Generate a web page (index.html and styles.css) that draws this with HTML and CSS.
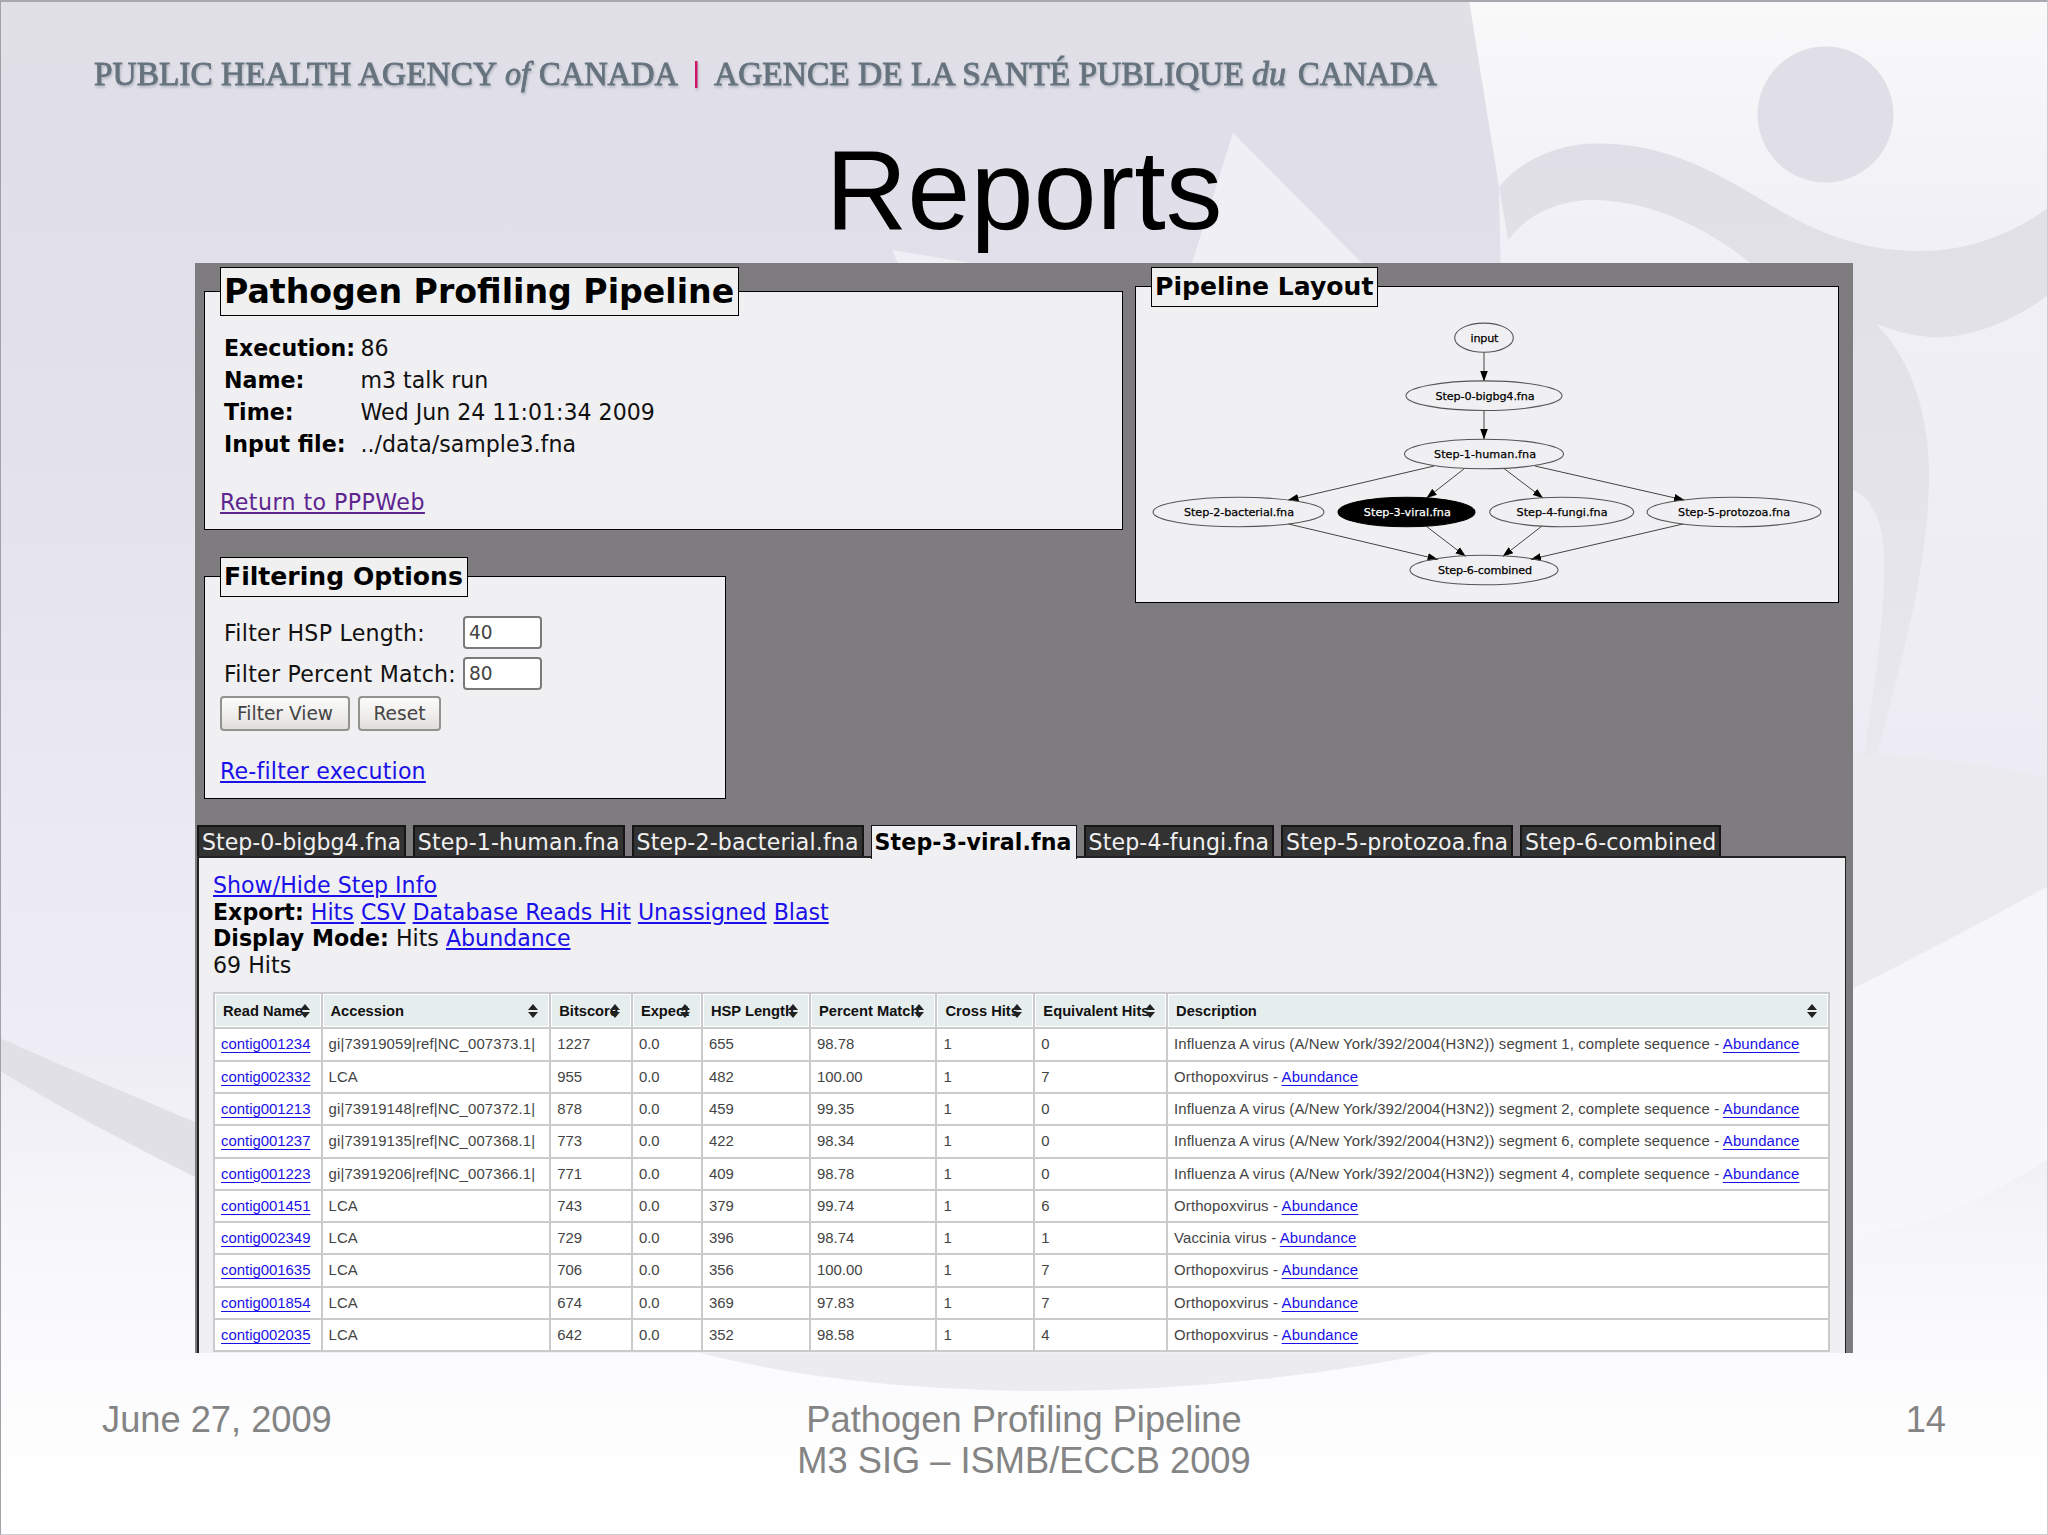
FILE: index.html
```
<!DOCTYPE html>
<html lang="en">
<head>
    <meta charset="UTF-8">
    <meta name="viewport" content="width=device-width, initial-scale=1.0">
    <title>Reports</title>
    <link rel="stylesheet" href="styles.css">
</head>
<body>
<div class="slide">
    <svg class="backdrop" viewBox="0 0 2048 1535" aria-hidden="true">
        <defs>
            <linearGradient id="base" gradientUnits="userSpaceOnUse" x1="0" y1="0" x2="0" y2="1535">
                <stop offset="0" stop-color="#e1e0e5"/>
                <stop offset="0.08" stop-color="#e0dfe9"/>
                <stop offset="0.28" stop-color="#e3e2eb"/>
                <stop offset="0.55" stop-color="#ebeaf3"/>
                <stop offset="0.68" stop-color="#eeedf5"/>
                <stop offset="0.82" stop-color="#f8f7fb"/>
                <stop offset="0.97" stop-color="#ffffff"/>
            </linearGradient>
            <linearGradient id="light" gradientUnits="userSpaceOnUse" x1="0" y1="0" x2="0" y2="780">
                <stop offset="0" stop-color="#f9f9fa"/>
                <stop offset="0.3" stop-color="#f1f0f6"/>
                <stop offset="1" stop-color="#edecf4"/>
            </linearGradient>
            <linearGradient id="arm" gradientUnits="userSpaceOnUse" x1="0" y1="140" x2="0" y2="760">
                <stop offset="0" stop-color="#e0dfe7"/>
                <stop offset="0.4" stop-color="#e3e2e8"/>
                <stop offset="1" stop-color="#e9e8ee"/>
            </linearGradient>
            <linearGradient id="low" gradientUnits="userSpaceOnUse" x1="0" y1="886" x2="0" y2="1330">
                <stop offset="0" stop-color="#f6f6fa"/>
                <stop offset="0.6" stop-color="#f7f6fa"/>
                <stop offset="1" stop-color="#f8f7fb" stop-opacity="0"/>
            </linearGradient>
            <linearGradient id="fold" gradientUnits="userSpaceOnUse" x1="0" y1="1159" x2="0" y2="1320">
                <stop offset="0" stop-color="#f1f0f5"/>
                <stop offset="1" stop-color="#f8f7fb" stop-opacity="0"/>
            </linearGradient>
        </defs>
        <rect width="2048" height="1535" fill="url(#base)"/>
        <path d="M1469 0H2048V780H1511L1499 187Z" fill="url(#light)"/>
        <path d="M1499 187C1522 158 1562 142 1602 143.500C1665 144 1716 172 1762 200C1800 223 1850 251 1919 251C1972 251 2015 232 2048 208V295C2010 325 1960 340 1930 337C1908 335 1892 330 1876 324C1912 360 1929 415 1929 475C1929 560 1905 650 1877 755L1864 755C1874 690 1885 620 1884 560C1883 520 1872 498 1853 490L1749 262C1700 222 1640 199 1589 200C1553 202 1526 216 1508 240L1512 262Z" fill="url(#arm)"/>
        <circle cx="1825.500" cy="114.500" r="68" fill="#e0dfe7"/>
        <path d="M1233 133L1362 263H1192Z" fill="#f0eff5"/>
        <path d="M892 250L970 263H898Z" fill="#f0eff5"/>
        <path d="M1840 752Q1950 756 2048 778V890L1840 997Z" fill="#ebeaee"/>
        <path d="M2048 886Q1960 935 1840 995V1340H2048Z" fill="url(#low)"/>
        <path d="M2048 1159Q1950 1222 1880 1231L1840 1250V1340H2048Z" fill="url(#fold)"/>
        <path d="M0 1038Q90 1078 195 1122V1177Q80 1120 0 1071Z" fill="#e1e0e6"/>
        <path d="M700 1353Q850 1391 1050 1391Q1240 1391 1432 1353Z" fill="#ececef"/>
    </svg>

    <header class="masthead">
        <svg class="wordmark" viewBox="0 0 1350 44" role="img">
            <text x="0" y="30" textLength="403" lengthAdjust="spacingAndGlyphs">PUBLIC HEALTH AGENCY</text>
            <text class="small-word" x="411" y="30" textLength="25" lengthAdjust="spacingAndGlyphs">of</text>
            <text x="445" y="30" textLength="139" lengthAdjust="spacingAndGlyphs">CANADA</text>
            <rect x="601" y="6" width="2.500" height="27" fill="#cf1668"/>
            <text x="620" y="30" textLength="530" lengthAdjust="spacingAndGlyphs">AGENCE DE LA SANTÉ PUBLIQUE</text>
            <text class="small-word" x="1158" y="30" textLength="34" lengthAdjust="spacingAndGlyphs">du</text>
            <text x="1204" y="30" textLength="139" lengthAdjust="spacingAndGlyphs">CANADA</text>
        </svg>
        <h1>Reports</h1>
    </header>

    <main class="report">
        <div class="top">
            <div class="left">
                <fieldset class="info">
                    <legend>Pathogen Profiling Pipeline</legend>
                    <dl>
                        <dt>Execution:</dt><dd>86</dd>
                        <dt>Name:</dt><dd>m3 talk run</dd>
                        <dt>Time:</dt><dd>Wed Jun 24 11:01:34 2009</dd>
                        <dt>Input file:</dt><dd>../data/sample3.fna</dd>
                    </dl>
                    <a class="visited" href="#">Return to PPPWeb</a>
                </fieldset>
                <fieldset class="filter">
                    <legend>Filtering Options</legend>
                    <div class="fields">
                        <label for="hsp">Filter HSP Length:</label>
                        <input id="hsp" type="text" value="40">
                        <label for="pct">Filter Percent Match:</label>
                        <input id="pct" type="text" value="80">
                    </div>
                    <div class="buttons">
                        <button type="button" class="view">Filter View</button>
                        <button type="button" class="reset">Reset</button>
                    </div>
                    <a href="#">Re-filter execution</a>
                </fieldset>
            </div>
            <fieldset class="layout">
                <legend>Pipeline Layout</legend>
                <svg class="graph" viewBox="0 18 702 296" width="702" height="296">
                    <defs>
                        <marker id="arrow" markerUnits="userSpaceOnUse" markerWidth="11" markerHeight="8" refX="10" refY="4" orient="auto">
                            <path d="M0 0.200L10.500 4L0 7.800Z"/>
                        </marker>
                    </defs>
                    <g class="edges">
                        <path d="M348 64V93"/>
                        <path d="M348 123V151"/>
                        <path d="M298 178L152.500 212"/>
                        <path d="M328.500 180.500L290.700 210"/>
                        <path d="M368 180.500L406.800 210"/>
                        <path d="M399 178L548 212"/>
                        <path d="M152.500 236L301.600 271.300"/>
                        <path d="M290.700 238.600L329.500 268.300"/>
                        <path d="M406 238L367 268.300"/>
                        <path d="M547 236L395 271.300"/>
                    </g>
                    <g class="nodes">
                        <ellipse cx="348" cy="49.700" rx="29.300" ry="14.600"/>
                        <ellipse cx="348" cy="107.700" rx="78" ry="14.800"/>
                        <ellipse cx="348" cy="166" rx="79.500" ry="14.800"/>
                        <ellipse cx="102.500" cy="224" rx="85.500" ry="14.800"/>
                        <ellipse class="current" cx="270.500" cy="224" rx="68.500" ry="14.800"/>
                        <ellipse cx="425.700" cy="224" rx="72" ry="14.800"/>
                        <ellipse cx="598" cy="224" rx="87" ry="14.800"/>
                        <ellipse cx="348" cy="282" rx="74" ry="14.800"/>
                    </g>
                    <g class="names">
                        <text x="348.500" y="53.500" textLength="28">input</text>
                        <text x="349" y="111.500" textLength="99">Step-0-bigbg4.fna</text>
                        <text x="349" y="170" textLength="102">Step-1-human.fna</text>
                        <text x="103" y="228" textLength="110">Step-2-bacterial.fna</text>
                        <text class="current" x="271.300" y="228" textLength="87">Step-3-viral.fna</text>
                        <text x="426" y="228" textLength="91">Step-4-fungi.fna</text>
                        <text x="598" y="228" textLength="112">Step-5-protozoa.fna</text>
                        <text x="349" y="285.500" textLength="94">Step-6-combined</text>
                    </g>
                </svg>
            </fieldset>
        </div>

        <nav class="tabs">
            <span>Step-0-bigbg4.fna</span>
            <span>Step-1-human.fna</span>
            <span>Step-2-bacterial.fna</span>
            <span class="active">Step-3-viral.fna</span>
            <span>Step-4-fungi.fna</span>
            <span>Step-5-protozoa.fna</span>
            <span>Step-6-combined</span>
        </nav>

        <section class="step">
            <div><a href="#">Show/Hide Step Info</a></div>
            <div><b>Export:</b> <a href="#">Hits</a> <a href="#">CSV</a> <a href="#">Database Reads Hit</a> <a href="#">Unassigned</a> <a href="#">Blast</a></div>
            <div><b>Display Mode:</b> Hits <a href="#">Abundance</a></div>
            <div>69 Hits</div>
            <table class="hits">
                <thead>
                    <tr><th>Read Name</th><th>Accession</th><th>Bitscore</th><th>Expect</th><th>HSP Length</th><th>Percent Match</th><th>Cross Hits</th><th>Equivalent Hits</th><th>Description</th></tr>
                </thead>
                <tbody>
                    <tr><td><a href="#">contig001234</a></td><td>gi|73919059|ref|NC_007373.1|</td><td>1227</td><td>0.0</td><td>655</td><td>98.78</td><td>1</td><td>0</td><td>Influenza A virus (A/New York/392/2004(H3N2)) segment 1, complete sequence - <a href="#">Abundance</a></td></tr>
                    <tr><td><a href="#">contig002332</a></td><td>LCA</td><td>955</td><td>0.0</td><td>482</td><td>100.00</td><td>1</td><td>7</td><td>Orthopoxvirus - <a href="#">Abundance</a></td></tr>
                    <tr><td><a href="#">contig001213</a></td><td>gi|73919148|ref|NC_007372.1|</td><td>878</td><td>0.0</td><td>459</td><td>99.35</td><td>1</td><td>0</td><td>Influenza A virus (A/New York/392/2004(H3N2)) segment 2, complete sequence - <a href="#">Abundance</a></td></tr>
                    <tr><td><a href="#">contig001237</a></td><td>gi|73919135|ref|NC_007368.1|</td><td>773</td><td>0.0</td><td>422</td><td>98.34</td><td>1</td><td>0</td><td>Influenza A virus (A/New York/392/2004(H3N2)) segment 6, complete sequence - <a href="#">Abundance</a></td></tr>
                    <tr><td><a href="#">contig001223</a></td><td>gi|73919206|ref|NC_007366.1|</td><td>771</td><td>0.0</td><td>409</td><td>98.78</td><td>1</td><td>0</td><td>Influenza A virus (A/New York/392/2004(H3N2)) segment 4, complete sequence - <a href="#">Abundance</a></td></tr>
                    <tr><td><a href="#">contig001451</a></td><td>LCA</td><td>743</td><td>0.0</td><td>379</td><td>99.74</td><td>1</td><td>6</td><td>Orthopoxvirus - <a href="#">Abundance</a></td></tr>
                    <tr><td><a href="#">contig002349</a></td><td>LCA</td><td>729</td><td>0.0</td><td>396</td><td>98.74</td><td>1</td><td>1</td><td>Vaccinia virus - <a href="#">Abundance</a></td></tr>
                    <tr><td><a href="#">contig001635</a></td><td>LCA</td><td>706</td><td>0.0</td><td>356</td><td>100.00</td><td>1</td><td>7</td><td>Orthopoxvirus - <a href="#">Abundance</a></td></tr>
                    <tr><td><a href="#">contig001854</a></td><td>LCA</td><td>674</td><td>0.0</td><td>369</td><td>97.83</td><td>1</td><td>7</td><td>Orthopoxvirus - <a href="#">Abundance</a></td></tr>
                    <tr><td><a href="#">contig002035</a></td><td>LCA</td><td>642</td><td>0.0</td><td>352</td><td>98.58</td><td>1</td><td>4</td><td>Orthopoxvirus - <a href="#">Abundance</a></td></tr>
                </tbody>
            </table>
        </section>
    </main>

    <footer>
        <div class="date">June 27, 2009</div>
        <div class="venue">Pathogen Profiling Pipeline<br>M3 SIG – ISMB/ECCB 2009</div>
        <div class="page">14</div>
    </footer>
</div>
</body>
</html>
```
FILE: styles.css
```
*{
    box-sizing: border-box;
}
body{
    margin: 0;
    font-family: 'Liberation Sans', sans-serif;
}

.slide{
    position: relative;
    width: 2048px;
    height: 1535px;
    overflow: hidden;
    display: flex;
    flex-direction: column;
    border: 1px solid #cccbd0;
    border-top: 2px solid #a9a8ae;
    border-left-color: #a2a1a8;
}
.backdrop{
    position: absolute;
    left: -1px;
    top: -2px;
    width: 2048px;
    height: 1535px;
    z-index: -1;
}

/* masthead */
.masthead{
    height: 261px;
    padding: 53px 0 0 93px;
}
.wordmark{
    display: block;
    width: 1350px;
    height: 44px;
    overflow: visible;
    font-family: 'Liberation Serif', serif;
    font-size: 34px;
    fill: #66737e;
    stroke: #66737e;
    stroke-width: 0.9px;
    filter: drop-shadow(1px 2px 1px rgba(100, 115, 130, 0.35));
}
.wordmark rect{
    stroke: none;
}
.small-word{
    font-style: italic;
}
h1{
    margin: 26px 0 0 -93px;
    font-size: 113.4px;
    line-height: 130px;
    font-weight: normal;
    text-align: center;
    color: #000;
}

/* report page */
.report{
    width: 1658px;
    height: 1090px;
    margin-left: 194px;
    padding: 4px 7px 0 2px;
    background: #7e7c7e;
    overflow: hidden;
    font: 22.1px/26.7px 'DejaVu Sans', sans-serif;
    color: #111;
}
.top{
    display: flex;
    gap: 12px;
    align-items: flex-start;
    height: 558px;
    padding-left: 7px;
}
fieldset{
    margin: 0;
    padding: 0 0 0 15px;
    border: 1px solid #000;
    background: #f0eff1;
}
legend{
    padding: 0 4px 0 3px;
    border: 1px solid #000;
    background: #f0f0f0;
    font-weight: bold;
    font-size: 25.1px;
    line-height: 37.5px;
    color: #000;
    white-space: nowrap;
}
a{
    color: #1a10ea;
    text-decoration: underline;
}
a.visited{
    color: #5c2590;
    letter-spacing: 0.45px;
}

.info{
    width: 919px;
    height: 263px;
}
.info legend{
    font-size: 33.2px;
    line-height: 46px;
    padding: 1px 4px 0 3px;
}
dl{
    display: grid;
    grid-template-columns: 136.5px auto;
    grid-auto-rows: 32.3px;
    margin: 15.5px 0 28.5px 4px;
    line-height: 32.3px;
}
dt{
    font-weight: bold;
    color: #000;
}
dd{
    margin: 0;
}

.filter{
    width: 522px;
    height: 242px;
    margin-top: 27px;
}
.fields{
    display: grid;
    grid-template-columns: 239px 79px;
    grid-auto-rows: 33px;
    row-gap: 7.7px;
    margin: 19.5px 0 6px 4px;
    line-height: 34px;
    letter-spacing: 0.25px;
    white-space: nowrap;
}
.fields input{
    width: 79px;
    height: 33px;
    padding: 0 4px;
    border: 2px solid #7c7a78;
    border-radius: 4px;
    background: #fff;
    font: 18.6px 'DejaVu Sans', sans-serif;
    color: #444;
}
.buttons{
    display: flex;
    gap: 8px;
    margin-bottom: 27px;
}
.buttons button{
    height: 35px;
    padding: 0;
    border: 2px solid #94928e;
    border-radius: 4px;
    background: linear-gradient(#fbfbfa, #f0efed 50%, #dfdedb);
    font: 18.6px 'DejaVu Sans', sans-serif;
    color: #444;
}
.filter > a{
    letter-spacing: 0.2px;
}
.view{
    width: 130px;
}
.reset{
    width: 83px;
}

.layout{
    width: 704px;
    height: 336px;
    padding: 0;
}
.layout legend{
    margin-left: 15px;
}
.graph{
    display: block;
    margin-top: -1px;
}
.edges path{
    fill: none;
    stroke: #444;
    stroke-width: 1;
    marker-end: url(#arrow);
}
.nodes ellipse{
    fill: none;
    stroke: #555;
    stroke-width: 1.1;
}
.nodes .current{
    fill: #000;
    stroke: #000;
}
.names text{
    font-family: 'DejaVu Sans', sans-serif;
    font-size: 11.2px;
    text-anchor: middle;
    fill: #000;
    stroke: #000;
    stroke-width: 0.25px;
}
.names .current{
    fill: #fff;
    stroke: #fff;
}

/* tabs */
.tabs{
    display: flex;
    gap: 6.9px;
}
.tabs span{
    height: 31px;
    padding: 0 3px;
    border: 2px solid #161616;
    border-bottom: 0;
    background: #333233;
    color: #f0f0f0;
    line-height: 31px;
    white-space: nowrap;
}
.tabs span + span{
    letter-spacing: 0.13px;
}
.tabs .active{
    position: relative;
    height: 34px;
    margin-bottom: -3px;
    border-width: 1px 1px 0;
    padding: 1px 4px 0 3px;
    background: #f0eff1;
    color: #000;
    font-weight: bold;
}

.step{
    height: 520px;
    padding: 14px 0 0 14px;
    border: 2px solid #222;
    border-right-width: 1px;
    border-bottom: 0;
    background: #f0eff1;
    letter-spacing: 0.02px;
}
.step b{
    color: #000;
}

.hits{
    display: grid;
    gap: 2px;
    width: 1617px;
    margin-top: 13px;
    padding: 2px;
    background: #cbcacc;
    font: 14.9px/20px 'Liberation Sans', sans-serif;
    color: #444;
    letter-spacing: 0;
}
.hits thead, .hits tbody{
    display: grid;
    gap: 2px;
}
.hits tr{
    display: grid;
    grid-template-columns: 105.5px 226.7px 79.7px 68.1px 106px 124.5px 95.9px 130.7px 1fr;
    column-gap: 2px;
    height: 30.3px;
}
.hits thead tr{
    height: 33.5px;
}
.hits th, .hits td{
    padding: 5px 0 0 6px;
    background: #fff;
    text-align: left;
    white-space: nowrap;
}
.hits td:nth-child(2), .hits td:last-child{
    letter-spacing: 0.15px;
}
.hits th{
    position: relative;
    padding: 6px 0 0 7px;
    border: 1px solid #fff;
    background: #e6eded;
    color: #111;
    font-size: 14.7px;
}
/* sort arrows sit on top of long headings */
.hits th::before, .hits th::after{
    content: '';
    position: absolute;
    right: 10px;
    border: 5px solid transparent;
}
.hits th::before{
    top: 4px;
    border-bottom: 6px solid #222;
}
.hits th::after{
    top: 17px;
    border-top: 6px solid #222;
}
.hits a{
    text-underline-offset: 3px;
}

footer{
    display: grid;
    grid-template-columns: 400px 1fr 400px;
    padding: 47px 101px 0 101px;
    font-size: 36.25px;
    line-height: 40.8px;
    color: #848484;
}
.venue{
    text-align: center;
}
.page{
    text-align: right;
}
```
